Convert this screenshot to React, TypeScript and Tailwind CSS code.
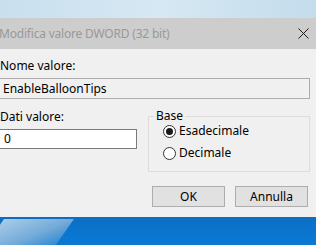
/** Windows "edit DWORD" dialog, cropped, sitting on the desktop */
const Radio = ({ label, checked }: { label: string; checked?: boolean }) => {
  return (
    <div className="flex items-center h-[22px]">
      <span className="flex items-center justify-center w-[13px] h-[13px] rounded-full border border-[#333333] bg-white">
        {checked && <span className="w-[7px] h-[7px] rounded-full bg-[#1a1a1a]" />}
      </span>
      <span className="ml-[3px] text-[12px] text-black">{label}</span>
    </div>
  );
};

const Button = ({ children }: { children: string }) => {
  return (
    <div className="flex items-center justify-center w-[73px] h-[21px] bg-[#e1e1e1] border border-[#adadad] text-[12px] text-black">
      {children}
    </div>
  );
};

export default function App() {
  return (
    <div
      className="w-[316px] h-[245px] overflow-hidden flex flex-col bg-[#f0f0f0]"
      style={{ fontFamily: '"Noto Sans", "Open Sans", sans-serif' }}
    >
      {/* sky behind the window */}
      <div className="h-[18px] bg-gradient-to-r from-[#c9dfee] via-[#d6e8f3] to-[#c4dcec]" />

      {/* title bar */}
      <div className="flex items-center justify-between h-[31px] bg-[#cdcdcd]">
        <span className="-ml-[1px] text-[12px] text-[#999999] tracking-[-0.2px]">
          Modifica valore DWORD (32 bit)
        </span>
        <svg width="11" height="11" viewBox="0 0 11 11" className="mr-[7px]">
          <path d="M0.5 0.5L10.5 10.5M10.5 0.5L0.5 10.5" stroke="#1a1a1a" strokeWidth="1" />
        </svg>
      </div>

      {/* body */}
      <div className="flex flex-col h-[168px] bg-[#f0f0f0] text-[12px] text-black">
        <span className="mt-[9px] leading-[16px]">Nome valore:</span>
        <div className="flex items-center h-[21px] mt-[4px] -ml-[8px] mr-[6px] pl-[10px] bg-[#f0f0f0] border border-[#adadad]">
          EnableBalloonTips
        </div>

        <div className="flex mt-[10px]">
          <div className="flex flex-col w-[148px]">
            <span className="leading-[16px]">Dati valore:</span>
            <div className="flex items-center w-[145px] h-[20px] mt-[4px] -ml-[8px] pl-[11px] bg-white border border-[#7a7a7a]">
              0
            </div>
          </div>

          <div className="relative flex flex-col w-[162px] h-[56px] mt-[7px] pl-[14px] pt-[3px] border border-[#dcdcdc]">
            <span className="absolute -top-[9px] left-[5px] px-[2px] leading-[16px] bg-[#f0f0f0]">Base</span>
            <Radio label="Esadecimale" checked />
            <Radio label="Decimale" />
          </div>
        </div>

        <div className="flex justify-end gap-[10px] mt-[14px] mr-[8px]">
          <Button>OK</Button>
          <Button>Annulla</Button>
        </div>
      </div>

      {/* desktop wallpaper */}
      <div className="relative flex-1 bg-gradient-to-b from-[#0b6fc4] to-[#0a7ad6] overflow-hidden">
        <div className="absolute -left-[10px] top-[2px] w-[70px] h-[40px] bg-gradient-to-br from-[#bcd6ea] via-[#7fb1da] to-transparent -skew-x-[35deg] opacity-90" />
      </div>
    </div>
  );
}
